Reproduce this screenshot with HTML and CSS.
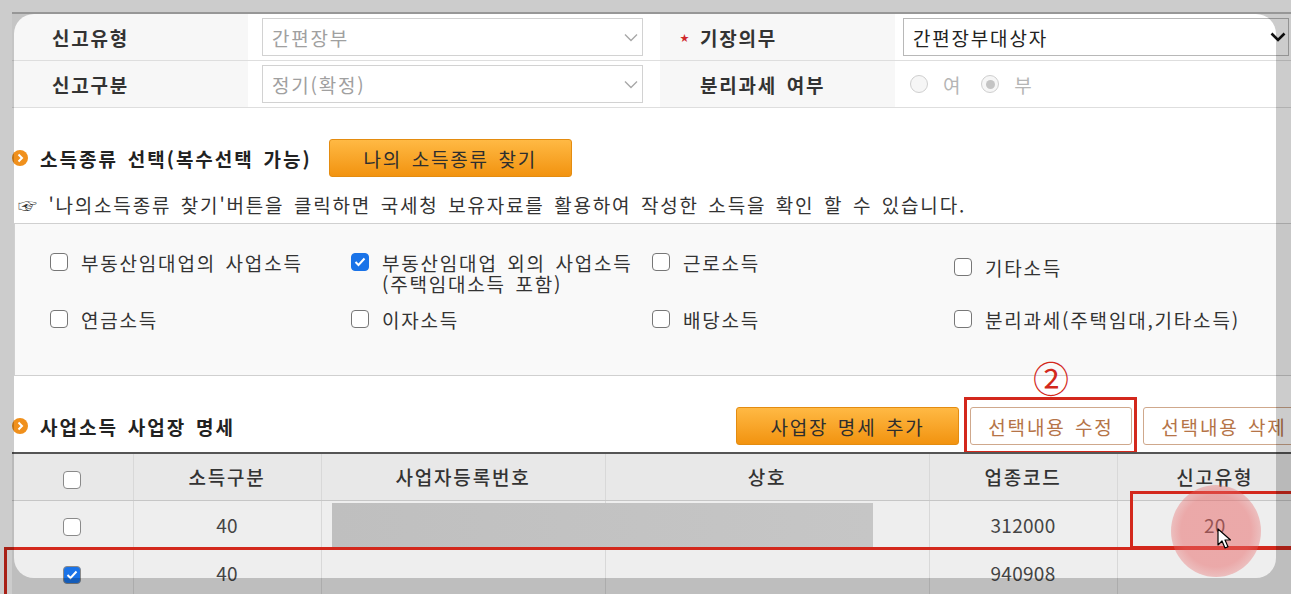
FILE: index.html
```html
<!DOCTYPE html>
<html lang="ko">
<head>
  <meta charset="UTF-8">
  <title>종합소득세 신고 - 소득종류 선택</title>
  <link rel="stylesheet" href="styles.css">
</head>
<body>
  <div class="page">
    <div class="form-grid">
      <div class="label">신고유형</div>
      <div class="value val-a">
        <div class="select">
          <span>간편장부</span>
          <svg width="14" height="9" viewBox="0 0 14 9"><path d="M1 1.5l6 6 6-6" fill="none" stroke="#a8a8a8" stroke-width="1.4"/></svg>
        </div>
      </div>
      <div class="label"><span class="req">★</span>기장의무</div>
      <div class="value val-b">
        <div class="select select-dark">
          <span>간편장부대상자</span>
          <svg width="16" height="10" viewBox="0 0 16 10"><path d="M1.5 1.5l6.5 6.5 6.5-6.5" fill="none" stroke="#111" stroke-width="2.6"/></svg>
        </div>
      </div>

      <div class="label">신고구분</div>
      <div class="value val-a">
        <div class="select">
          <span>정기(확정)</span>
          <svg width="14" height="9" viewBox="0 0 14 9"><path d="M1 1.5l6 6 6-6" fill="none" stroke="#a8a8a8" stroke-width="1.4"/></svg>
        </div>
      </div>
      <div class="label">분리과세 여부</div>
      <div class="value radios">
        <span class="radio-item"><span class="radio"></span>여</span>
        <span class="radio-item"><span class="radio on"></span>부</span>
      </div>
    </div>

    <div class="section-head first">
      <h3 class="sec-title">
        <svg class="bullet" width="16" height="16" viewBox="0 0 16 16"><circle cx="8" cy="8" r="8" fill="#f0901c"/><path d="M6.5 4.5L10 8l-3.5 3.5" fill="none" stroke="#fff" stroke-width="2"/></svg>
        소득종류 선택(복수선택 가능)
      </h3>
      <button class="btn btn-orange btn-find">나의 소득종류 찾기</button>
    </div>

    <p class="notice">☞ '나의소득종류 찾기'버튼을 클릭하면 국세청 보유자료를 활용하여 작성한 소득을 확인 할 수 있습니다.</p>

    <div class="income-box">
      <div class="item"><span class="chk"></span><span>부동산임대업의 사업소득</span></div>
      <div class="item"><span class="chk on"><svg width="12" height="10" viewBox="0 0 12 10"><path d="M1.5 5l3 3 6-6.5" fill="none" stroke="#fff" stroke-width="2"/></svg></span><span>부동산임대업 외의 사업소득<br>(주택임대소득 포함)</span></div>
      <div class="item"><span class="chk"></span><span>근로소득</span></div>
      <div class="item low"><span class="chk"></span><span>기타소득</span></div>
      <div class="item"><span class="chk"></span><span>연금소득</span></div>
      <div class="item"><span class="chk"></span><span>이자소득</span></div>
      <div class="item"><span class="chk"></span><span>배당소득</span></div>
      <div class="item"><span class="chk"></span><span>분리과세(주택임대,기타소득)</span></div>
    </div>

    <div class="section-head second">
      <h3 class="sec-title">
        <svg class="bullet" width="16" height="16" viewBox="0 0 16 16"><circle cx="8" cy="8" r="8" fill="#f0901c"/><path d="M6.5 4.5L10 8l-3.5 3.5" fill="none" stroke="#fff" stroke-width="2"/></svg>
        사업소득 사업장 명세
      </h3>
      <div class="btn-group">
        <button class="btn btn-orange btn-add">사업장 명세 추가</button>
        <span class="marked">
          <button class="btn btn-line">선택내용 수정</button>
          <span class="mark-box"></span>
          <span class="mark-num">②</span>
        </span>
        <button class="btn btn-line">선택내용 삭제</button>
      </div>
    </div>

    <div class="table-wrap">
      <table class="biz-table">
        <colgroup>
          <col style="width:121px">
          <col style="width:188px">
          <col style="width:284px">
          <col style="width:324px">
          <col style="width:188px">
          <col>
        </colgroup>
        <thead>
          <tr>
            <th><span class="chk"></span></th>
            <th>소득구분</th>
            <th>사업자등록번호</th>
            <th>상호</th>
            <th>업종코드</th>
            <th>신고유형</th>
          </tr>
        </thead>
        <tbody>
          <tr>
            <td><span class="chk"></span></td>
            <td>40</td>
            <td></td>
            <td></td>
            <td>312000</td>
            <td>20</td>
          </tr>
          <tr>
            <td><span class="chk on"><svg width="12" height="10" viewBox="0 0 12 10"><path d="M1.5 5l3 3 6-6.5" fill="none" stroke="#fff" stroke-width="2"/></svg></span></td>
            <td>40</td>
            <td></td>
            <td></td>
            <td>940908</td>
            <td></td>
          </tr>
        </tbody>
      </table>
      <div class="redact"></div>
      <div class="mark-row"></div>
      <div class="mark-cell"></div>
      <div class="click-dot"></div>
      <svg class="cursor" width="14" height="22" viewBox="0 0 14 22"><path d="M1 1v16l4-4 3 7 3-1.3-3-6.7h5.5z" fill="#fff" stroke="#000" stroke-width="1.2" stroke-linejoin="round"/></svg>
    </div>
  </div>

  <div class="spotlight"></div>
</body>
</html>
```

FILE: styles.css
```css
* {
  box-sizing: border-box;
}

html, body {
  margin: 0;
  overflow: hidden;
  background: #fff;
}

body {
  font-family: "Noto Sans CJK KR", "Noto Sans", sans-serif;
  font-size: 19px;
  letter-spacing: 1.8px;
  word-spacing: 2.5px;
  color: #333;
  height: 594px;
}

.page {
  width: 1300px;
  margin: 12px 0 0 12px;
  border-top: 2px solid #bdbdbd;
}

/* 상단 신고 정보 */
.form-grid {
  display: grid;
  grid-template-columns: 236px 412px 235px 417px;
}

.form-grid > div {
  height: 47px;
  border-bottom: 1px solid #dedede;
  display: flex;
  align-items: center;
}

.label {
  background: #f7f7f7;
  padding-left: 40px;
  font-weight: 700;
}

.req {
  display: inline-block;
  width: 20px;
  margin-left: -20px;
  color: #d0282a;
  font-size: 9px;
}

.value {
  background: #fff;
}

.val-a {
  padding: 0 17px 0 14px;
}

.val-b {
  padding-left: 8px;
}

.select {
  width: 100%;
  height: 38px;
  border: 1px solid #d2d2d2;
  background: #fff;
  display: flex;
  align-items: center;
  justify-content: space-between;
  padding: 0 4px 0 9px;
  color: #a0a0a0;
}

.select-dark {
  width: 386px;
  color: #222;
  border-color: #b8b8b8;
  padding-right: 2px;
}

.radios {
  padding-left: 15px;
}

.radio-item {
  display: inline-flex;
  align-items: center;
  gap: 15px;
  margin-right: 19px;
  color: #b5b5b5;
}

.radio {
  width: 18px;
  height: 18px;
  border-radius: 50%;
  border: 1px solid #cfcfcf;
  background: #f6f6f6;
  display: inline-flex;
  align-items: center;
  justify-content: center;
}

.radio.on::after {
  content: "";
  width: 9px;
  height: 9px;
  border-radius: 50%;
  background: #c4c4c4;
}

/* 섹션 제목 */
.section-head {
  display: flex;
  align-items: center;
  height: 38px;
}

.section-head.first {
  margin-top: 31px;
}

.section-head.second {
  margin-top: 31px;
}

.sec-title {
  margin: 0;
  font-size: 19px;
  font-weight: 700;
  letter-spacing: 2px;
  display: flex;
  align-items: center;
  color: #222;
}

.bullet {
  margin-right: 12px;
}

.btn {
  height: 38px;
  font-family: inherit;
  font-size: 19px;
  letter-spacing: 1.8px;
  word-spacing: 2.5px;
  border-radius: 3px;
  cursor: pointer;
  padding: 0;
}

.btn-orange {
  background: linear-gradient(#ffb944, #f29310);
  border: 1px solid #e48c10;
  color: #2e2e2e;
}

.btn-find {
  width: 243px;
  margin-left: 17px;
}

.btn-add {
  width: 223px;
}

.btn-line {
  width: 162px;
  background: #fff;
  border: 1px solid #cfa88c;
  color: #b57447;
}

.btn-group {
  margin-left: auto;
  margin-right: 7px;
  display: flex;
  gap: 11px;
}

.marked {
  position: relative;
  display: flex;
}

.mark-box {
  position: absolute;
  left: -6px;
  top: -10px;
  right: -5px;
  bottom: -9px;
  border: 3px solid #d3281c;
}

.mark-num {
  position: absolute;
  left: 0;
  right: 0;
  top: -50px;
  text-align: center;
  color: #d3281c;
  font-size: 36px;
  line-height: 40px;
  letter-spacing: 0;
}

.notice {
  margin: 17px 0 0 6px;
  line-height: 22px;
  color: #333;
}

/* 소득종류 체크박스 */
.income-box {
  margin: 7px 0 0 2px;
  border: 1px solid #d0d0d0;
  border-right: none;
  background: #f9f9f9;
  padding: 28px 0 45px 35px;
  display: grid;
  grid-template-columns: 301px 301px 302px 1fr;
  row-gap: 15px;
  line-height: 21px;
}

.item {
  display: flex;
  align-items: flex-start;
  gap: 13px;
}

.item.low {
  margin-top: 5px;
}

.item .chk {
  margin-top: 1px;
}

.chk {
  width: 18px;
  height: 18px;
  flex: none;
  border: 1.5px solid #777;
  border-radius: 4px;
  background: #fff;
  display: inline-flex;
  align-items: center;
  justify-content: center;
  vertical-align: middle;
}

.chk.on {
  background: #1a73e8;
  border-color: #1a73e8;
}

/* 사업장 명세 표 */
.table-wrap {
  position: relative;
  margin-top: 7px;
}

.biz-table {
  width: 100%;
  table-layout: fixed;
  border-collapse: collapse;
  border-top: 2px solid #555;
}

.biz-table th {
  height: 47px;
  background: #e8e8e8;
  font-weight: 500;
  color: #333;
  border-bottom: 1px solid #c6c6c6;
  border-left: 1px solid #d8d8d8;
}

.biz-table td {
  height: 48px;
  text-align: center;
  background: #eeeeee;
  color: #444;
  letter-spacing: 0.3px;
  border-bottom: 1px solid #d2d2d2;
  border-left: 1px solid #d8d8d8;
}

.biz-table th:first-child,
.biz-table td:first-child {
  border-left: none;
}

.biz-table .chk {
  border-color: #8a8a8a;
}

.redact {
  position: absolute;
  left: 320px;
  top: 51px;
  width: 541px;
  height: 44px;
  background: linear-gradient(90deg, #bfbfbf, #c6c6c6);
}

.mark-row {
  position: absolute;
  left: -8px;
  top: 95px;
  width: 1320px;
  height: 50px;
  border: 3px solid #d3281c;
}

.mark-cell {
  position: absolute;
  left: 1118px;
  top: 39px;
  width: 200px;
  height: 58px;
  border: 3px solid #d3281c;
}

.click-dot {
  position: absolute;
  left: 1159px;
  top: 33px;
  width: 90px;
  height: 92px;
  border-radius: 50%;
  background: radial-gradient(rgba(232, 100, 100, 0.5) 55%, rgba(232, 100, 100, 0.3) 75%, rgba(232, 100, 100, 0) 100%);
}

.cursor {
  position: absolute;
  left: 1205px;
  top: 76px;
}

/* 화면 녹화 강조 영역 */
.spotlight {
  position: fixed;
  left: 14px;
  top: 14px;
  width: 1262px;
  height: 564px;
  border-radius: 20px;
  box-shadow: 0 0 0 2000px rgba(0, 0, 0, 0.2);
  pointer-events: none;
  z-index: 10;
}
```
